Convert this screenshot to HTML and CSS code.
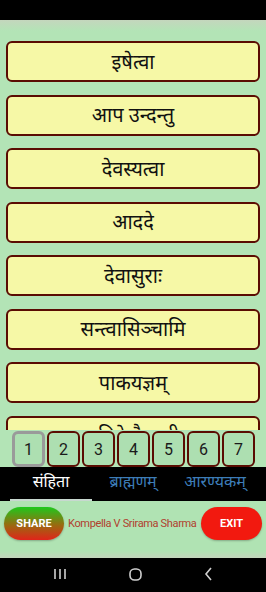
FILE: index.html
```html
<!DOCTYPE html>
<html>
<head>
<meta charset="utf-8">
<link rel="stylesheet" href="styles.css">
</head>
<body>
<div class="screen">
  <div class="status"></div>
  <div class="main">
    <div class="list">
      <div class="item">इषेत्वा</div>
      <div class="item">आप उन्दन्तु</div>
      <div class="item">देवस्यत्वा</div>
      <div class="item">आददे</div>
      <div class="item">देवासुराः</div>
      <div class="item">सन्त्वासिञ्चामि</div>
      <div class="item">पाकयज्ञम्</div>
      <div class="item">पवित्रे वैष्णवी</div>
    </div>
    <div class="pages">
      <div class="page current">1</div>
      <div class="page">2</div>
      <div class="page">3</div>
      <div class="page">4</div>
      <div class="page">5</div>
      <div class="page">6</div>
      <div class="page">7</div>
    </div>
  </div>
  <div class="tabs">
    <div class="tab active">संहिता</div>
    <div class="tab">ब्राह्मणम्</div>
    <div class="tab">आरण्यकम्</div>
  </div>
  <div class="footer">
    <div class="pill share">SHARE</div>
    <div class="author">Kompella V Srirama Sharma</div>
    <div class="pill exit">EXIT</div>
  </div>
  <div class="nav">
    <svg class="navicon" width="14" height="12" viewBox="0 0 14 12"><path d="M2 1v10M7 1v10M12 1v10" stroke="#cfcfcf" stroke-width="1.6" fill="none"/></svg>
    <svg class="navicon" width="13" height="13" viewBox="0 0 13 13"><rect x="1" y="1" width="11" height="11" rx="4.5" stroke="#cfcfcf" stroke-width="1.6" fill="none"/></svg>
    <svg class="navicon" width="9" height="14" viewBox="0 0 9 14"><path d="M7 1L2 7l5 6" stroke="#cfcfcf" stroke-width="1.6" fill="none"/></svg>
  </div>
</div>
</body>
</html>
```

FILE: styles.css
```css
html, body {
  margin: 0;
  padding: 0;
  background: #000;
}
.screen {
  width: 266px;
  height: 592px;
  display: flex;
  flex-direction: column;
  font-family: "Noto Sans Devanagari", "Noto Sans", Roboto, sans-serif;
  overflow: hidden;
}
.status {
  height: 20px;
  background: #000;
  flex: none;
}
.main {
  height: 447px;
  flex: none;
  display: flex;
  flex-direction: column;
  background: linear-gradient(#c4d6bd 0px, #b3e4b6 11px) #b3e4b6;
}
.list {
  height: 410px;
  flex: none;
  overflow: hidden;
  padding: 21px 6px 0 6px;
  display: flex;
  flex-direction: column;
  gap: 12.57px;
  box-sizing: border-box;
}
.item {
  flex: none;
  height: 41px;
  box-sizing: border-box;
  border: 2.5px solid #5a0c02;
  border-radius: 6px;
  background: #f6f8a6;
  display: flex;
  align-items: center;
  justify-content: center;
  padding-top: 4px;
  font-size: 20px;
  font-weight: 400;
  color: #111;
}
.pages {
  display: flex;
  gap: 2px;
  padding: 1px 0 0 12px;
}
.page {
  width: 33px;
  height: 36px;
  box-sizing: border-box;
  border: 2.5px solid #5a0c02;
  border-radius: 6px;
  background: #addfb1;
  display: flex;
  align-items: center;
  justify-content: center;
  font-family: Roboto, sans-serif;
  font-size: 16px;
  color: #1a1a1a;
}
.page.current {
  border: 3px solid #9a9a9a;
}
.tabs {
  height: 34px;
  flex: none;
  background: #000;
  display: flex;
  padding-left: 10px;
  box-sizing: border-box;
}
.tab {
  width: 82px;
  display: flex;
  align-items: center;
  justify-content: center;
  font-size: 16px;
  color: #3d7db8;
  padding-bottom: 2px;
  box-sizing: border-box;
}
.tab.active {
  color: #fff;
  border-bottom: 2px solid #c8d8d0;
  padding-bottom: 0;
}
.footer {
  height: 57px;
  flex: none;
  background: linear-gradient(#b0e3b3 0, #b0e3b3 50px, #c3d5bc 57px);
  display: flex;
  align-items: flex-start;
  padding: 6px 4px 0 4px;
  box-sizing: border-box;
}
.pill {
  height: 33px;
  width: 60px;
  border-radius: 17px;
  display: flex;
  align-items: center;
  justify-content: center;
  font-family: Roboto, "Liberation Sans", sans-serif;
  font-weight: bold;
  font-size: 11px;
  color: #fff;
  flex: none;
  box-shadow: 0 1px 2px rgba(0,0,0,0.25);
}
.share {
  background: linear-gradient(#1ec81c, #9a6a10 55%, #e0241a);
}
.exit {
  background: #f2190f;
  margin-left: auto;
  width: 61px;
}
.author {
  font-family: Roboto, "Liberation Sans", sans-serif;
  font-size: 11px;
  letter-spacing: -0.35px;
  color: #b0402e;
  margin-left: 4px;
  line-height: 33px;
  white-space: nowrap;
}
.nav {
  flex: 1;
  background: #000;
  display: flex;
  align-items: center;
  justify-content: space-between;
  padding: 0 53px 2px 53px;
  box-sizing: border-box;
}
```
